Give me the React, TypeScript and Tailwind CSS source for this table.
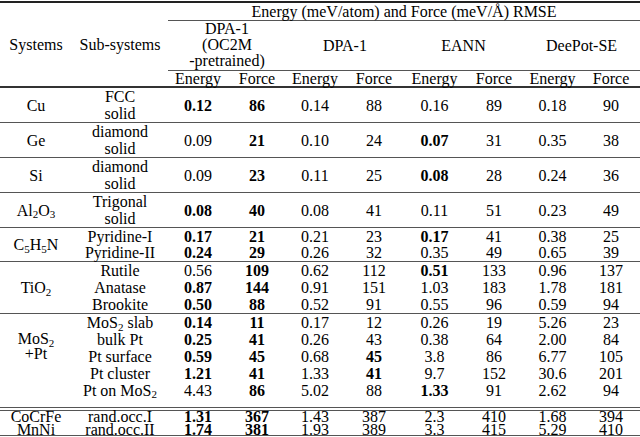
import React from "react";

type Row = { sub: React.ReactNode; h: string; vals: string[]; top?: boolean };
type Group = { sys: React.ReactNode; sysClass?: string; rows: Row[] };

const line = "border-t border-[#555]";
const S = ({ n }: { n: string }) => <sub className="text-[11px]">{n}</sub>;

const groups: Group[] = [
  {
    sys: "Cu",
    rows: [{ sub: <>FCC<br />solid</>, h: "h-[33px]", vals: ["*0.12", "*86", "0.14", "88", "0.16", "89", "0.18", "90"] }],
  },
  {
    sys: "Ge",
    rows: [{ sub: <>diamond<br />solid</>, h: "h-[34px]", vals: ["0.09", "*21", "0.10", "24", "*0.07", "31", "0.35", "38"] }],
  },
  {
    sys: "Si",
    rows: [{ sub: <>diamond<br />solid</>, h: "h-[33px]", vals: ["0.09", "*23", "0.11", "25", "*0.08", "28", "0.24", "36"] }],
  },
  {
    sys: <>Al<S n="2" />O<S n="3" /></>,
    rows: [{ sub: <>Trigonal<br />solid</>, h: "h-[34px]", vals: ["*0.08", "*40", "0.08", "41", "0.11", "51", "0.23", "49"] }],
  },
  {
    sys: <>C<S n="5" />H<S n="5" />N</>,
    rows: [
      { sub: "Pyridine-I", h: "h-[17px]", vals: ["*0.17", "*21", "0.21", "23", "*0.17", "41", "0.38", "25"] },
      { sub: "Pyridine-II", h: "h-[17px]", vals: ["*0.24", "*29", "0.26", "32", "0.35", "49", "0.65", "39"] },
    ],
  },
  {
    sys: <>TiO<S n="2" /></>,
    rows: [
      { sub: "Rutile", h: "h-[17px]", vals: ["0.56", "*109", "0.62", "112", "*0.51", "133", "0.96", "137"] },
      { sub: "Anatase", h: "h-[17px]", vals: ["*0.87", "*144", "0.91", "151", "1.03", "183", "1.78", "181"] },
      { sub: "Brookite", h: "h-[18px]", vals: ["*0.50", "*88", "0.52", "91", "0.55", "96", "0.59", "94"] },
    ],
  },
  {
    sys: <>MoS<S n="2" /><br />+Pt</>,
    sysClass: "align-top pt-[17px]",
    rows: [
      { sub: <>MoS<S n="2" /> slab</>, h: "h-[17px]", vals: ["*0.14", "*11", "0.17", "12", "0.26", "19", "5.26", "23"] },
      { sub: "bulk Pt", h: "h-[17px]", vals: ["*0.25", "*41", "0.26", "43", "0.38", "64", "2.00", "84"] },
      { sub: "Pt surface", h: "h-[17px]", vals: ["*0.59", "*45", "0.68", "*45", "3.8", "86", "6.77", "105"] },
      { sub: "Pt cluster", h: "h-[17px]", vals: ["*1.21", "*41", "1.33", "*41", "9.7", "152", "30.6", "201"] },
      { sub: <>Pt on MoS<S n="2" /></>, h: "h-[27px]", top: true, vals: ["4.43", "*86", "5.02", "88", "*1.33", "91", "2.62", "94"] },
    ],
  },
];

const last: Row[] = [
  { sub: "rand.occ.I", h: "h-[11px]", vals: ["*1.31", "*367", "1.43", "387", "2.3", "410", "1.68", "394"] },
  { sub: "rand.occ.II", h: "h-[14px]", vals: ["*1.74", "*381", "1.93", "389", "3.3", "415", "5.29", "410"] },
];

function Val({ v }: { v: string }) {
  return v.startsWith("*") ? <span className="font-bold">{v.slice(1)}</span> : <>{v}</>;
}

const widths = [72, 96, 60, 58, 58, 60, 61, 58, 59, 58];

export default function App() {
  return (
    <div className="w-[640px] h-[437px] overflow-hidden bg-white pt-px font-['Liberation_Serif',serif] text-[16px] leading-[15px] text-black">
      <table className="w-[640px] table-fixed border-collapse border-t-2 border-[#222] text-center">
        <colgroup>
          {widths.map((w, i) => (
            <col key={i} style={{ width: w }} />
          ))}
        </colgroup>
        <thead>
          <tr className="h-[18px]">
            <td rowSpan={3} className="p-0 align-middle border-b-2 border-[#333]">Systems</td>
            <td rowSpan={3} className="p-0 align-middle border-b-2 border-[#333]">Sub-systems</td>
            <td colSpan={8} className="p-0 border-b border-[#555]">
              Energy (meV/atom) and Force (meV/Å) RMSE
            </td>
          </tr>
          <tr className="h-[50px]">
            <td colSpan={2} className="p-0 leading-[16px] border-b border-[#555]">
              DPA-1
              <br />
              (OC2M
              <br />
              -pretrained)
            </td>
            <td colSpan={2} className="p-0 border-b border-[#555]">DPA-1</td>
            <td colSpan={2} className="p-0 border-b border-[#555]">EANN</td>
            <td colSpan={2} className="p-0 border-b border-[#555]">DeePot-SE</td>
          </tr>
          <tr className="h-[17px]">
            {["Energy", "Force", "Energy", "Force", "Energy", "Force", "Energy", "Force"].map((t, i) => (
              <td key={i} className="p-0 border-b-2 border-[#333] whitespace-nowrap">{t}</td>
            ))}
          </tr>
        </thead>
        <tbody>
          {groups.map((g, gi) =>
            g.rows.map((r, ri) => {
              const b = ri === 0 ? line : "";
              const va = r.top ? "align-top pt-px" : "align-middle";
              const tall = r.h.includes("33") || r.h.includes("34");
              return (
                <tr key={`${gi}-${ri}`} className={r.h}>
                  {ri === 0 && (
                    <td rowSpan={g.rows.length} className={`p-0 ${b} ${g.sysClass ?? "align-middle"}`}>
                      {g.sys}
                    </td>
                  )}
                  <td className={`p-0 whitespace-nowrap ${b} ${va} ${tall ? "leading-[17px]" : ""}`}>{r.sub}</td>
                  {r.vals.map((v, vi) => (
                    <td key={vi} className={`p-0 ${b} ${va}`}>
                      <Val v={v} />
                    </td>
                  ))}
                </tr>
              );
            })
          )}
          {last.map((r, ri) => {
            const b =
              ri === 0
                ? "border-t-[4px] border-double border-[#555] align-middle leading-[11px]"
                : "border-b border-[#555] align-bottom leading-[10px]";
            return (
              <tr key={`l-${ri}`} className={r.h}>
                <td className={`p-0 ${b}`}>{ri === 0 ? "CoCrFe" : "MnNi"}</td>
                <td className={`p-0 whitespace-nowrap ${b}`}>{r.sub}</td>
                {r.vals.map((v, vi) => (
                  <td key={vi} className={`p-0 ${b}`}>
                    <Val v={v} />
                  </td>
                ))}
              </tr>
            );
          })}
        </tbody>
      </table>
    </div>
  );
}
